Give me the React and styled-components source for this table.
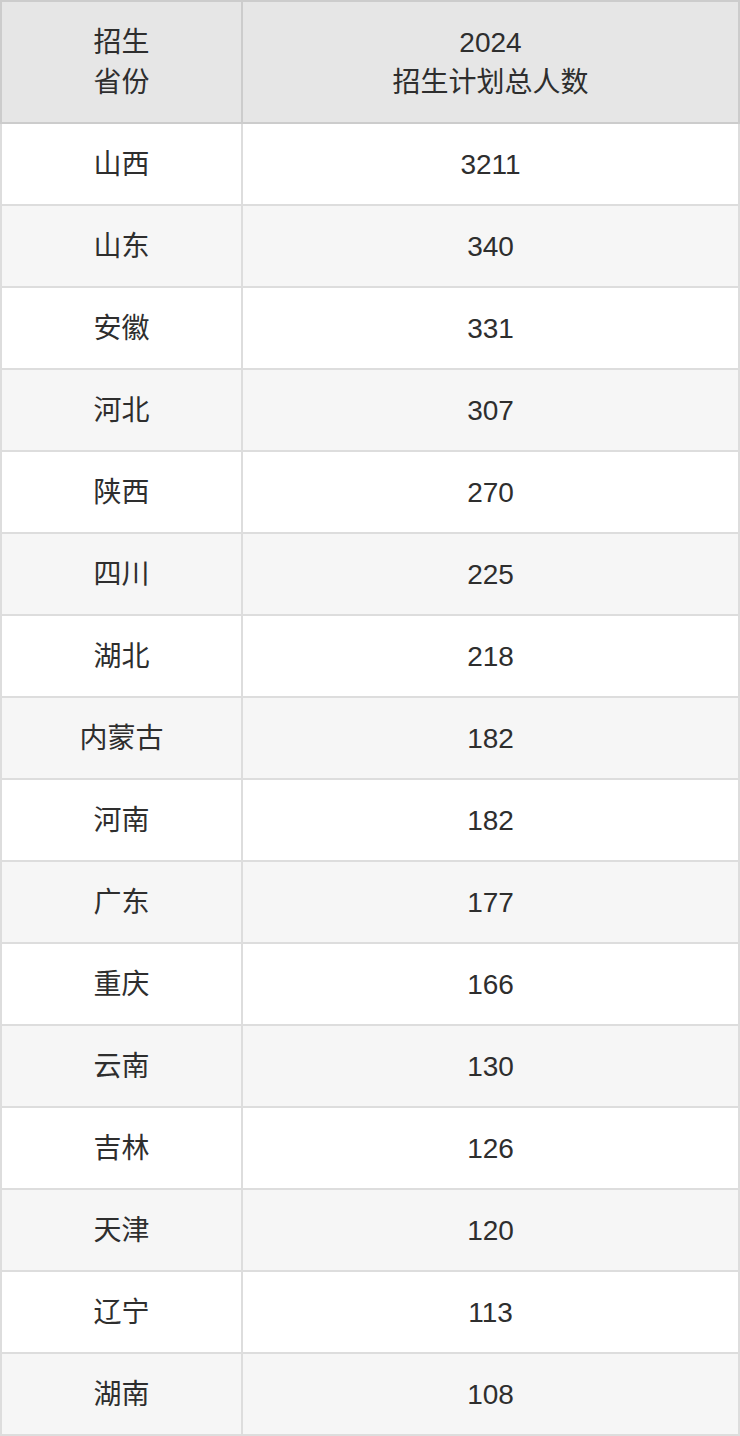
import React from "react";
import { styled, createGlobalStyle } from "styled-components";

const GlobalStyle = createGlobalStyle`
  html, body {
    margin: 0;
    padding: 0;
    background: #fff;
  }
`;

const Table = styled.table`
  width: 740px;
  border-collapse: collapse;
  font-family: "Liberation Sans", "Noto Sans CJK SC", sans-serif;
  font-size: 28px;
  line-height: 40px;
  color: #2e2e2e;
  text-align: center;
`;

const HeadCell = styled.th`
  font-weight: normal;
  background: #e6e6e6;
  border: 2px solid #cccccc;
  padding: 21px 0 19px;
  width: ${(p) => p.$width || "auto"};
`;

const Row = styled.tr`
  background: ${(p) => (p.$striped ? "#f6f6f6" : "#ffffff")};
`;

const Cell = styled.td`
  border: 2px solid #dddddd;
  padding: 21px 0 19px;
`;

const rows = [
  ["山西", 3211],
  ["山东", 340],
  ["安徽", 331],
  ["河北", 307],
  ["陕西", 270],
  ["四川", 225],
  ["湖北", 218],
  ["内蒙古", 182],
  ["河南", 182],
  ["广东", 177],
  ["重庆", 166],
  ["云南", 130],
  ["吉林", 126],
  ["天津", 120],
  ["辽宁", 113],
  ["湖南", 108],
];

const App = () => {
  return (
    <>
      <GlobalStyle />
      <Table>
        <thead>
          <tr>
            <HeadCell $width="239px">
              招生
              <br />
              省份
            </HeadCell>
            <HeadCell>
              2024
              <br />
              招生计划总人数
            </HeadCell>
          </tr>
        </thead>
        <tbody>
          {rows.map(([province, total], i) => (
            <Row key={province + i} $striped={i % 2 === 1}>
              <Cell>{province}</Cell>
              <Cell>{total}</Cell>
            </Row>
          ))}
        </tbody>
      </Table>
    </>
  );
};

export default App;
